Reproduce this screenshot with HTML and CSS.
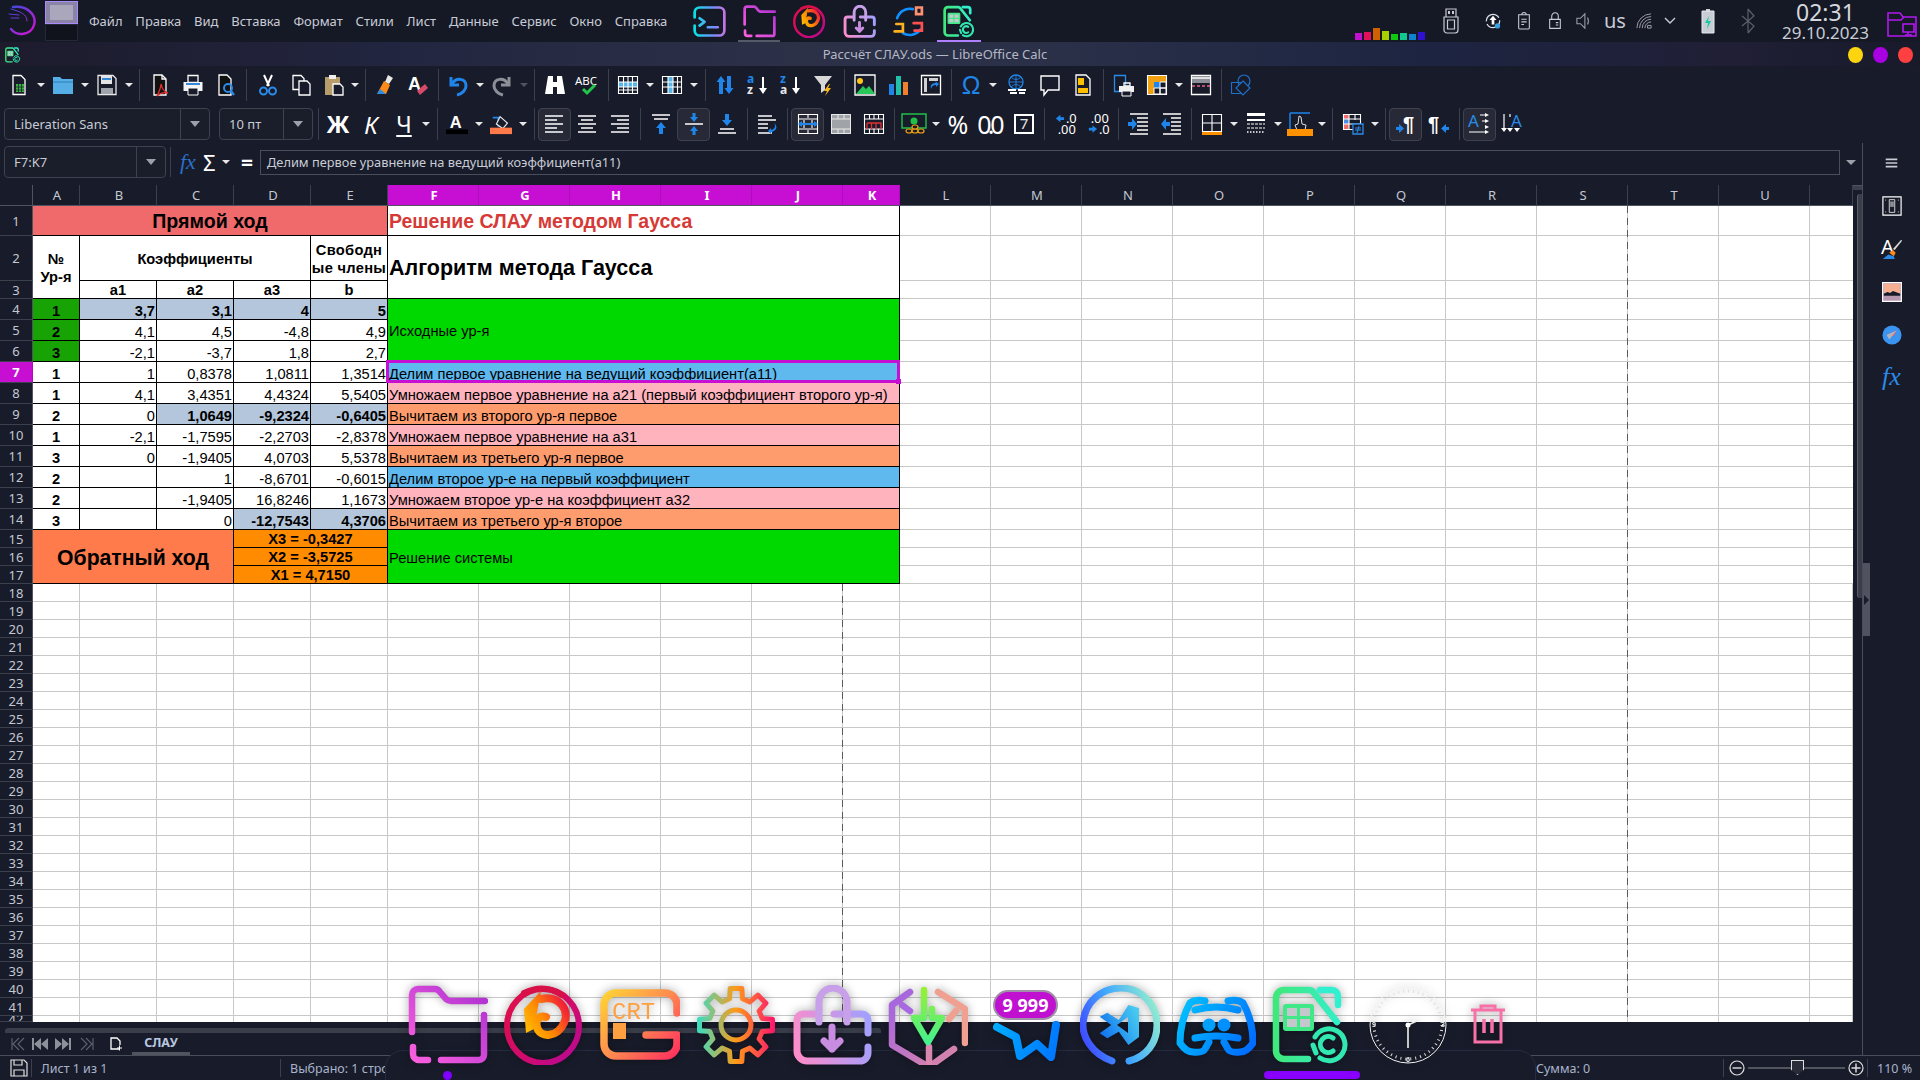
FILE: index.html
```html
<!DOCTYPE html>
<html lang="ru">
<head>
<meta charset="utf-8">
<title>Рассчёт СЛАУ.ods — LibreOffice Calc</title>
<link rel="stylesheet" href="styles.css">
</head>
<body>
<svg class="defs" width="0" height="0" aria-hidden="true">
  <defs>
    <linearGradient id="gFolder" gradientUnits="userSpaceOnUse" x1="0" y1="80" x2="80" y2="0"><stop offset="0" stop-color="#ff62e0"/><stop offset="1" stop-color="#a82fd0"/></linearGradient>
    <linearGradient id="gRing" gradientUnits="userSpaceOnUse" x1="0" y1="0" x2="80" y2="80"><stop offset="0" stop-color="#e01040"/><stop offset=".6" stop-color="#d00a70"/><stop offset="1" stop-color="#b00aa0"/></linearGradient>
    <linearGradient id="gSwirl" gradientUnits="userSpaceOnUse" x1="15" y1="50" x2="65" y2="20"><stop offset="0" stop-color="#ffd000"/><stop offset=".5" stop-color="#ff8a00"/><stop offset="1" stop-color="#f01040"/></linearGradient>
    <linearGradient id="gCrt" gradientUnits="userSpaceOnUse" x1="0" y1="0" x2="80" y2="80"><stop offset="0" stop-color="#ffdf30"/><stop offset=".5" stop-color="#ff8a50"/><stop offset="1" stop-color="#ff2060"/></linearGradient>
    <linearGradient id="gGear" gradientUnits="userSpaceOnUse" x1="0" y1="40" x2="80" y2="40"><stop offset="0" stop-color="#30e0c8"/><stop offset=".5" stop-color="#ff9a18"/><stop offset="1" stop-color="#ff1070"/></linearGradient>
    <linearGradient id="gBag" gradientUnits="userSpaceOnUse" x1="0" y1="60" x2="80" y2="40"><stop offset="0" stop-color="#ff8cc8"/><stop offset="1" stop-color="#a0a0ff"/></linearGradient>
    <linearGradient id="gHexL" gradientUnits="userSpaceOnUse" x1="0" y1="0" x2="80" y2="80"><stop offset="0" stop-color="#9c60e8"/><stop offset="1" stop-color="#e08aa0"/></linearGradient>
    <linearGradient id="gHexG" gradientUnits="userSpaceOnUse" x1="0" y1="0" x2="0" y2="60"><stop offset="0" stop-color="#9cf030"/><stop offset="1" stop-color="#40f090"/></linearGradient>
    <linearGradient id="gWave" gradientUnits="userSpaceOnUse" x1="0" y1="40" x2="80" y2="70"><stop offset="0" stop-color="#00b4ff"/><stop offset="1" stop-color="#0070ff"/></linearGradient>
    <linearGradient id="gVs" gradientUnits="userSpaceOnUse" x1="0" y1="60" x2="80" y2="30"><stop offset="0" stop-color="#4040ff"/><stop offset=".5" stop-color="#40a8ff"/><stop offset="1" stop-color="#90ecd0"/></linearGradient>
    <linearGradient id="gVsF" gradientUnits="userSpaceOnUse" x1="20" y1="50" x2="60" y2="30"><stop offset="0" stop-color="#1070f0"/><stop offset="1" stop-color="#48cdf0"/></linearGradient>
    <linearGradient id="gDisc" gradientUnits="userSpaceOnUse" x1="0" y1="20" x2="80" y2="70"><stop offset="0" stop-color="#00c4ff"/><stop offset="1" stop-color="#0064ff"/></linearGradient>
    <linearGradient id="gCalc" gradientUnits="userSpaceOnUse" x1="0" y1="40" x2="80" y2="40"><stop offset="0" stop-color="#40e878"/><stop offset="1" stop-color="#30f0d8"/></linearGradient>
    <linearGradient id="gTerm" gradientUnits="userSpaceOnUse" x1="0" y1="40" x2="80" y2="40"><stop offset="0" stop-color="#00e8e0"/><stop offset=".6" stop-color="#7090ff"/><stop offset="1" stop-color="#d070e0"/></linearGradient>
    <linearGradient id="gKali" gradientUnits="userSpaceOnUse" x1="0" y1="0" x2="30" y2="30"><stop offset="0" stop-color="#3050e0"/><stop offset="1" stop-color="#e010d0"/></linearGradient>

    <symbol id="dFolder" viewBox="0 0 80 80"><g fill="none" stroke="url(#gFolder)" stroke-width="6.5" stroke-linecap="round" stroke-linejoin="round"><path d="M4 47V10a6 6 0 0 1 6-6h17q3 0 5 3l6 7q2 2 5 2h34"/><path d="M76 30v40a5 5 0 0 1-5 5H33"/><path d="M5 62v7a6 6 0 0 0 6 6h9"/></g></symbol>
    <symbol id="dFire" viewBox="0 0 80 80"><g fill="none" stroke-linecap="round"><ellipse cx="39" cy="41" rx="36" ry="37" stroke="url(#gRing)" stroke-width="6"/><path d="M20 8Q40 -2 58 10" stroke="#d81048" stroke-width="6"/><path d="M37 14C56 10 66 26 60 38C54 52 36 54 33 42C31 34 36 30 42 32" stroke="url(#gSwirl)" stroke-width="8"/></g><path d="M37 6L20 24L22 48L30 44L34 22Z" fill="url(#gSwirl)"/></symbol>
    <symbol id="dCrt" viewBox="0 0 80 80"><g fill="none" stroke="url(#gCrt)" stroke-width="7.5" stroke-linecap="round" stroke-linejoin="round"><path d="M77 28V20a12 12 0 0 0-12-12H16A12 12 0 0 0 4 20v39a12 12 0 0 0 12 12h49a12 12 0 0 0 12-12V50H46"/></g><rect x="13" y="38" width="13" height="16" fill="#ffa040"/><text x="12" y="34" class="crt">CRT</text></symbol>
    <symbol id="dGear" viewBox="0 0 80 80"><g fill="none" stroke="url(#gGear)" stroke-width="5" stroke-linejoin="round"><path d="M33.5 13.8L34.2 3.5H45.8L46.5 13.8L53.9 16.9L61.8 10.1L69.9 18.2L63.1 26.1L66.2 33.5L76.5 34.2V45.8L66.2 46.5L63.1 53.9L69.9 61.8L61.8 69.9L53.9 63.1L46.5 66.2L45.8 76.5H34.2L33.5 66.2L26.1 63.1L18.2 69.9L10.1 61.8L16.9 53.9L13.8 46.5L3.5 45.8V34.2L13.8 33.5L16.9 26.1L10.1 18.2L18.2 10.1L26.1 16.9Z"/><circle cx="40" cy="40" r="15"/></g></symbol>
    <symbol id="dBag" viewBox="0 0 80 80"><g fill="none" stroke-width="7" stroke-linecap="round" stroke-linejoin="round"><path d="M25 29H11a6 6 0 0 0-6 6v31a10 10 0 0 0 10 10h53a8 8 0 0 0 8-8V62M76 48V35a6 6 0 0 0-6-6H42" stroke="url(#gBag)"/><path d="M27 37V17a14 14 0 0 1 28 0v20" stroke="#c8a0ea"/><path d="M40 42v22M32 56l8 8 8-8" stroke="#c88ce0"/></g></symbol>
    <symbol id="dPack" viewBox="0 0 80 80"><g fill="none" stroke-width="6.5" stroke-linecap="round" stroke-linejoin="round"><path d="M22 7L4 20v40l37 22 25-18" stroke="url(#gHexL)"/><path d="M41 62v18" stroke="#d888b0"/><path d="M22 26L14 20" stroke="#a868e0"/><path d="M50 7l27 17v34" stroke="#f0a090"/><path d="M68 26l-7 8" stroke="#f0a090"/><path d="M36 5v28H26l14 24 14-24H44V24" stroke="url(#gHexG)"/></g></symbol>
    <symbol id="dWave" viewBox="0 0 80 80"><path d="M13 42L32 52L36 71L53 59L67 72L72 40" fill="none" stroke="url(#gWave)" stroke-width="8" stroke-linecap="round" stroke-linejoin="round"/></symbol>
    <symbol id="dVs" viewBox="0 0 80 80"><path d="M32 76C10 68 2 50 3 38C5 16 22 3 41 3C60 3 77 18 77 40C77 58 66 72 49 76" fill="none" stroke="url(#gVs)" stroke-width="7" stroke-linecap="round"/><path fill="url(#gVsF)" fill-rule="evenodd" d="M59 23V52L48.4 60 38.8 46.7 27.3 53.3 19.7 48.3 31.2 40 19.7 31.7 27.3 27.7 38.8 35 48.4 20ZM48 32V48L37 40Z"/></symbol>
    <symbol id="dDisc" viewBox="0 0 80 80"><g fill="none" stroke="url(#gDisc)" stroke-width="7" stroke-linecap="round" stroke-linejoin="round"><path d="M29 16Q20 14 14 18Q4 36 4 58Q10 67 17 67Q27 68 29 64L33 57M52 16Q61 14 67 18Q77 36 77 58Q71 67 64 67Q54 68 52 64L48 57"/><path d="M19 25Q40 19 62 25M19 53Q40 49 62 53"/></g><circle cx="33" cy="40" r="6.5" fill="#00a0ff"/><circle cx="48" cy="40" r="6.5" fill="#0090ff"/></symbol>
    <symbol id="dCalc" viewBox="0 0 80 80"><g fill="none" stroke-linecap="round" stroke-linejoin="round"><path d="M36 74H12a8 8 0 0 1-8-8V13a8 8 0 0 1 8-8H37q3 0 5 3L65 37" stroke="url(#gCalc)" stroke-width="6.5"/><path d="M48 5H60a6 6 0 0 1 6 6v9" stroke="#30f0d0" stroke-width="6.5"/><path d="M43 52A16 16 0 1 1 48 73M41 60L44 68" stroke="#30e8b0" stroke-width="5"/><path d="M61 53A8 8 0 1 0 61 66" stroke="#30e8b0" stroke-width="5"/></g><rect x="11" y="19" width="31" height="27" rx="3" fill="#40e888"/><path fill="#c4c8cc" d="M15 23h10v8H15zM28 23h10v8H28zM15 34h10v8H15zM28 34h10v8H28z"/></symbol>
    <symbol id="dTerm" viewBox="0 0 80 80"><g fill="none" stroke="url(#gTerm)" stroke-width="6.5" stroke-linecap="round" stroke-linejoin="round"><path d="M4 30V18A12 12 0 0 1 16 6H64A12 12 0 0 1 76 18V62A12 12 0 0 1 64 74H16A12 12 0 0 1 4 62V50"/><path d="M16 32l12 9-12 9M36 54H60"/></g></symbol>
    <symbol id="dSync" viewBox="0 0 80 80"><g fill="none" stroke-width="6.5" stroke-linecap="round"><path d="M48 10A32 32 0 0 0 10 32M66 60A32 32 0 0 1 24 68" stroke="#1090ff"/><path d="M8 46H24V64H4" stroke="#ffb020"/><path d="M56 6H70V22H56Z" stroke="#ff9070"/><path d="M50 44H70V62H52" stroke="#ff5050"/></g></symbol>
  </defs>
</svg>

<div class="app">
  <header class="panel">
    <svg class="kali" viewBox="0 0 30 32"><g fill="none" stroke="url(#gKali)" stroke-width="2.400" stroke-linecap="round"><path d="M6 2C20 0 30 10 27 20C24 30 10 32 4 24"/><path d="M4 4C14 7 20 9 20 16" stroke-width="1"/><path d="M2 9L12 10M4 13L12 13" stroke-width="1"/></g></svg>
    <div class="pager"><span class="desk on"><i></i></span><span class="desk"></span></div>
    <nav class="menu"><span>Файл</span><span>Правка</span><span>Вид</span><span>Вставка</span><span>Формат</span><span>Стили</span><span>Лист</span><span>Данные</span><span>Сервис</span><span>Окно</span><span>Справка</span></nav>
    <div class="tasks">
      <span class="task"><svg class="tico"><use href="#dTerm"/></svg></span>
      <span class="task open"><svg class="tico"><use href="#dFolder"/></svg></span>
      <span class="task"><svg class="tico"><use href="#dFire"/></svg></span>
      <span class="task"><svg class="tico"><use href="#dBag"/></svg></span>
      <span class="task"><svg class="tico"><use href="#dSync"/></svg></span>
      <span class="task cur"><svg class="tico"><use href="#dCalc"/></svg></span>
    </div>
    <div class="eq"><i class="e1"></i><i class="e2"></i><i class="e3"></i><i class="e4"></i><i class="e5"></i><i class="e6"></i><i class="e7"></i><i class="e8"></i></div>
    <div class="tray">
      <svg class="tr w16" viewBox="0 0 16 26"><g fill="none" stroke="#c8ccd4" stroke-width="1.2"><path d="M3 1h10v8H3zM1 9h14v13a3 3 0 0 1-3 3H4a3 3 0 0 1-3-3z"/><path d="M4.5 12h7v9h-7z"/></g><path fill="#c8ccd4" d="M5 3h2v3H5zM9 3h2v3H9z"/></svg>
      <svg class="tr w18 m1" viewBox="0 0 18 18"><circle cx="9" cy="9" r="7.5" fill="none" stroke="#e0e2e8" stroke-width="1.4" stroke-dasharray="20 3"/><path fill="#fff" d="M9 3l4 5h-2.5v5h-3V8H5z"/><circle cx="14" cy="14.5" r="3" fill="#38a0e0"/></svg>
      <svg class="tr w18 m2" viewBox="0 0 18 20"><g fill="none" stroke="#c8ccd4" stroke-width="1.2"><path d="M3 3h12v15a1 1 0 0 1-1 1H4a1 1 0 0 1-1-1zM6.5 3a2.5 2.5 0 0 1 5 0M6 8h6M6 11h6M6 14h3"/></g></svg>
      <svg class="tr w18 m3" viewBox="0 0 18 22"><g fill="none" stroke="#c8ccd4" stroke-width="1.3"><path d="M2.500 9h13v11h-13zM5 9V5a4 4 0 0 1 8 0v4M10 13h3M10 16h3"/></g></svg>
      <svg class="tr w18 m4" viewBox="0 0 18 20"><g fill="none" stroke="#9ca0aa" stroke-width="1.2"><path d="M1 7h4l5-5v16l-5-5H1zM13 6q2 4 0 8"/></g></svg>
      <span class="us">us</span>
      <svg class="tr w18 m5" viewBox="0 0 18 18"><g fill="none" stroke="#a8acb4" stroke-width="1"><path d="M1 17A16 16 0 0 1 17 1M4 17A13 13 0 0 1 17 4M7 17A10 10 0 0 1 17 7M10 17A7 7 0 0 1 17 10"/><path d="M13 17v-3h4v3z"/></g></svg>
      <svg class="tr w12 m6" viewBox="0 0 12 8"><path d="M1 1l5 5 5-5" fill="none" stroke="#c8ccd4" stroke-width="1.4"/></svg>
      <svg class="tr w14 m7" viewBox="0 0 14 26"><path d="M5 1h4v2H5z" fill="#c8ccd4"/><path d="M1 3h12v22H1z" fill="#c8ccd4" stroke="#e8eaee"/><path d="M8 8L4 15h3l-1 6 4-8H7z" fill="#18c8a0"/></svg>
      <svg class="tr w14 m8" viewBox="0 0 14 26"><path d="M7 1v24M7 1l6 7-12 10M7 25l6-7L1 8" fill="none" stroke="#5c606a" stroke-width="1.2"/></svg>
      <div class="clock"><span class="time">02:31</span><span class="date">29.10.2023</span></div>
      <svg class="tr w30" viewBox="0 0 30 25"><g fill="none" stroke="#b018f0" stroke-width="1.6"><path d="M1 24V1h12l3 4h13v19z"/><path d="M1 8h13l3-3"/><path d="M16 12h11v8H16zM21 20v2M18 23h7"/></g></svg>
    </div>
  </header>

  <div class="titlebar">
    <svg class="docico" viewBox="0 0 80 80"><use href="#dCalc"/></svg>
    <span class="wtitle">Рассчёт СЛАУ.ods — LibreOffice Calc</span>
    <div class="winbtns"><i class="wy"></i><i class="wp"></i><i class="wr"></i></div>
  </div>

  <div class="toolbar tb1">
    <span class="btn"><svg viewBox="0 0 22 22"><path d="M5 1.500h8l4 4v15H5z" class="o"/><path fill="#3cb043" d="M8 10h8v8H8z"/><path d="M8 13h8M8 16h8M10.500 10v8M13.500 10v8" stroke="#181b29" stroke-width=".7"/></svg></span><span class="arr"></span>
    <span class="btn"><svg viewBox="0 0 22 22"><path d="M1 3h7l2 2h11v15H1z" fill="#56aee6"/><path d="M1 8h20" stroke="#2d7fb6"/></svg></span><span class="arr"></span>
    <span class="btn"><svg viewBox="0 0 22 22"><path d="M2 1.500h15l3 3v16H2z" fill="#181b29" stroke="#e8e8e8" stroke-width="1.300"/><path d="M5 2h11v8H5z" fill="#e4e4e4"/><path d="M6 5h9" stroke="#3488d8" stroke-width="2"/><path d="M5 14h12v6H5z" fill="#a0a4ac"/></svg></span><span class="arr"></span>
    <span class="sep"></span>
    <span class="btn"><svg viewBox="0 0 22 22"><path d="M5 1h8l4 4v16H5z" fill="#111" stroke="#fff" stroke-width="1.300"/><path d="M13 1v4h4" class="o"/><path d="M12 10c1 4 2 7 7 9-4-1-8 0-11 3 2-4 4-8 4-12z" fill="none" stroke="#e03030" stroke-width="1.300"/></svg></span>
    <span class="btn"><svg viewBox="0 0 22 22"><path d="M6 1.500h10v7H6z" class="o"/><path d="M1.500 8h19v9h-19z" fill="#f4f4f4"/><path d="M4 10h14" stroke="#3488d8" stroke-width="2"/><path d="M6 14h10v7H6z" fill="#181b29" stroke="#fff"/></svg></span>
    <span class="btn"><svg viewBox="0 0 22 22"><path d="M4 1h8l4 4v16H4z" fill="#111" stroke="#fff" stroke-width="1.300"/><circle cx="13" cy="14" r="4" fill="none" stroke="#2a8ae8" stroke-width="2"/><path d="M16 17l3 4" stroke="#2a8ae8" stroke-width="2.400"/></svg></span>
    <span class="sep"></span>
    <span class="btn nudge"><svg viewBox="0 0 22 22"><path d="M7 1l5 11M15 1l-5 11" stroke="#fff" stroke-width="2"/><circle cx="6.500" cy="17" r="3.500" fill="none" stroke="#2a8ae8" stroke-width="2"/><circle cx="15.500" cy="17" r="3.500" fill="none" stroke="#2a8ae8" stroke-width="2"/></svg></span>
    <span class="btn"><svg viewBox="0 0 22 22"><path d="M3 1.500h8l3 3v11H3z" fill="#181b29" stroke="#fff" stroke-width="1.300"/><path d="M9 7h8l3 3v11H9z" fill="#181b29" stroke="#fff" stroke-width="1.300"/></svg></span>
    <span class="btn"><svg viewBox="0 0 22 22"><path d="M2 3h15v18H2z" fill="#b89c6c"/><path d="M6 1h7v4H6z" fill="#f0f0f0"/><path d="M10 10h7l3 3v8H10z" fill="#181b29" stroke="#fff" stroke-width="1.300"/></svg></span><span class="arr short"></span>
    <span class="sep"></span>
    <span class="btn"><svg viewBox="0 0 22 22"><path d="M14 1l5 3-4 6-4-2z" fill="#e8e8e8"/><path d="M10 7l6 4-4 9H3z" fill="#ff8a18"/><path d="M3 20l3-5 6 5z" fill="#2a8ae8"/></svg></span>
    <span class="btn"><svg viewBox="0 0 22 22"><text x="1" y="16" class="ta">A</text><path d="M13 21l-3-4 8-7 3 4z" fill="#d84a6a"/></svg></span>
    <span class="sep"></span>
    <span class="btn tight"><svg viewBox="0 0 22 22"><g fill="none" stroke="#1f85ea" stroke-width="3"><path d="M4 3v8h8"/><path d="M5 10C9 3 19 4 19 12C19 16 15 20 10 21"/></g></svg></span><span class="arr"></span>
    <span class="btn"><svg viewBox="0 0 22 22"><g fill="none" stroke="#8c9098" stroke-width="3"><path d="M18 3v8h-8"/><path d="M17 10C13 3 3 4 3 12C3 16 7 20 12 21"/></g></svg></span><span class="arr dim"></span>
    <span class="sep"></span>
    <span class="btn"><svg viewBox="0 0 22 22"><path d="M4 2h5v6h4V2h5l3 18H13v-7H9v7H1z" fill="#fff"/></svg></span>
    <span class="btn spell"><svg viewBox="0 0 26 22"><text x="0" y="11" class="tabc">ABC</text><path d="M8 15l4 4 8-8" fill="none" stroke="#22c84a" stroke-width="3"/></svg></span>
    <span class="sep"></span>
    <span class="btn"><svg viewBox="0 0 22 22"><path d="M1 8h20v5H1z" fill="#56b4ea"/><path d="M1.500 2.500h19v17h-19zM1 8h20M1 13h20M1 16h20M6.500 2v18M11 2v18M15.500 2v18" class="ol"/></svg></span><span class="arr"></span>
    <span class="btn"><svg viewBox="0 0 22 22"><path d="M7 2h5v18H7z" fill="#56b4ea"/><path d="M1.500 2.500h19v17h-19zM1 8h20M1 13h20M7 2v18M12 2v18M16.500 2v18" class="ol"/></svg></span><span class="arr"></span>
    <span class="sep"></span>
    <span class="btn"><svg viewBox="0 0 22 22"><path d="M7 2l4.500 6H9v12H5V8H2.500zM15 20l-4.500-6H13V2h4v12h2.500z" fill="#1f85ea"/></svg></span>
    <span class="btn"><svg viewBox="0 0 22 22"><text x="0" y="9" class="tsb">a</text><text x="0" y="20" class="tsw">z</text><path d="M15 3h2v11h3l-4 6-4-6h3z" fill="#fff"/></svg></span>
    <span class="btn"><svg viewBox="0 0 22 22"><text x="0" y="9" class="tsb">z</text><text x="0" y="20" class="tsw">a</text><path d="M15 3h2v11h3l-4 6-4-6h3z" fill="#fff"/></svg></span>
    <span class="btn"><svg viewBox="0 0 22 22"><path d="M1 2h18l-7 9v5l-4 3v-8z" fill="#d8d8d8"/><path d="M16 10l-5 7h3l-2 5 6-8h-3l2-4z" fill="#ffb818"/></svg></span>
    <span class="sep"></span>
    <span class="btn"><svg viewBox="0 0 22 22"><path d="M1 1h20v20H1z" fill="#181b29" stroke="#fff" stroke-width="1.300"/><circle cx="6" cy="7" r="3" fill="#ffc818"/><path d="M2 20l7-8 3 3 3-3 6 8z" fill="#28c858"/></svg></span>
    <span class="btn"><svg viewBox="0 0 22 22"><path d="M2 10h5v11H2z" fill="#1f85ea"/><path d="M9 2h5v19H9z" fill="#22c0a8"/><path d="M16 8h5v13h-5z" fill="#f08030"/></svg></span>
    <span class="btn"><svg viewBox="0 0 22 22"><path d="M1.500 1.500h19v19h-19z" class="o"/><path d="M4 4h3v14H4zM9 4h9v3H9z" fill="#d0d0d0"/><path d="M11 15c-1-4 1-6 5-6l-1-2 4 3-3 3v-2c-3 0-4 1-5 4z" fill="#1f85ea"/></svg></span>
    <span class="sep"></span>
    <span class="btn"><span class="omega">Ω</span></span><span class="arr"></span>
    <span class="btn push"><svg viewBox="0 0 22 22"><circle cx="10" cy="8" r="7" fill="none" stroke="#1f85ea" stroke-width="1.300"/><path d="M3 8h14M10 1v14M5 3q5 5 10 0M5 13q5-5 10 0" fill="none" stroke="#1f85ea" stroke-width=".9"/><path d="M2 16h8M12 16h8M4 19h7M13 19h6" stroke="#fff" stroke-width="2"/></svg></span>
    <span class="btn"><svg viewBox="0 0 22 22"><path d="M2 2h18v14H9l-4 5v-5H2z" fill="#181b29" stroke="#fff" stroke-width="1.400"/></svg></span>
    <span class="btn"><svg viewBox="0 0 22 22"><path d="M4 1h10l4 4v16H4z" fill="#181b29" stroke="#fff" stroke-width="1.300"/><path d="M6 4h6v7H6zM6 14h10v5H6z" fill="#ffc000"/></svg></span>
    <span class="sep"></span>
    <span class="btn"><svg viewBox="0 0 22 22"><path d="M1.500 1.500h11v16h-11z" fill="none" stroke="#2a8ae8" stroke-width="1.300"/><path d="M11 9h6v3h-6z" class="o"/><path d="M6 12h15v6H6z" fill="#f0f0f0"/><path d="M9 17h9v5H9z" fill="#181b29" stroke="#fff"/></svg></span>
    <span class="btn"><svg viewBox="0 0 22 22"><path d="M1 1h20v20H1z" fill="#f0a010"/><path d="M8 8h6v6H8z" fill="#1f85ea"/><path d="M1.500 1.500h19v19h-19z" class="ol"/><path d="M14 8h6v6h-6zM8 14h6v6H8zM14 14h6v6h-6z" fill="#181b29" stroke="#fff" stroke-width="1"/></svg></span><span class="arr"></span>
    <span class="btn"><svg viewBox="0 0 22 22"><path d="M1.500 1.500h19v19h-19z" class="o"/><path d="M2 2h18v7H2z" fill="#8c9098"/><path d="M2 4h18" stroke="#e0e0e0" stroke-width="2"/><path d="M2 12h18" stroke="#e86a88" stroke-width="1.300" stroke-dasharray="3 2"/></svg></span>
    <span class="sep"></span>
    <span class="btn"><svg viewBox="0 0 22 22"><circle cx="14" cy="7" r="6" fill="none" stroke="#1f6fc8" stroke-width="1.200"/><path d="M1.500 8.500h10v11h-10z" fill="none" stroke="#1f6fc8" stroke-width="1.200"/><path d="M13 7l7 7-7 7-7-7z" fill="#181b29" stroke="#1f6fc8" stroke-width="1.200"/></svg></span>
  </div>

  <div class="toolbar tb2">
    <div class="combo font"><span class="val">Liberation Sans</span><span class="drop"></span></div>
    <div class="combo size"><span class="val">10 пт</span><span class="drop"></span></div>
    <span class="sep"></span>
    <span class="btn glyph bold">Ж</span>
    <span class="btn glyph ital">К</span>
    <span class="btn glyph under">Ч</span><span class="arr"></span>
    <span class="sep"></span>
    <span class="btn"><svg viewBox="0 0 24 22"><text x="4" y="15" class="ta">A</text><path d="M0 17h24v5H0z" fill="#000"/></svg></span><span class="arr"></span>
    <span class="btn"><svg viewBox="0 0 24 22"><path d="M3 4h6v10" fill="none" stroke="#1f85ea" stroke-width="1.800"/><path d="M11 3l8 7-5 6-7-5z" fill="#181b29" stroke="#e8e8e8" stroke-width="1.300"/><path d="M0 15h24v7H0z" fill="#ff7a4a"/></svg></span><span class="arr"></span>
    <span class="sep"></span>
    <span class="btn on"><svg viewBox="0 0 22 22"><path d="M2 3h18M2 7h12M2 11h18M2 15h12M2 19h18" class="ln"/></svg></span>
    <span class="btn"><svg viewBox="0 0 22 22"><path d="M2 3h18M5 7h12M2 11h18M5 15h12M2 19h18" class="ln"/></svg></span>
    <span class="btn"><svg viewBox="0 0 22 22"><path d="M2 3h18M8 7h12M2 11h18M8 15h12M2 19h18" class="ln"/></svg></span>
    <span class="sep"></span>
    <span class="btn"><svg viewBox="0 0 22 22"><path d="M2 2h18M4 6h14" class="ln"/><path d="M11 9l5 6h-3v6H9v-6H6z" fill="#1f85ea"/></svg></span>
    <span class="btn on"><svg viewBox="0 0 22 22"><path d="M11 9L7 4h2.500V0h3v4H15zM11 13l4 5h-2.500v4h-3v-4H7z" fill="#1f85ea"/><path d="M2 11h18" class="ln"/></svg></span>
    <span class="btn"><svg viewBox="0 0 22 22"><path d="M11 13l5-6h-3V1H9v6H6z" fill="#1f85ea"/><path d="M4 16h14M2 20h18" class="ln"/></svg></span>
    <span class="sep"></span>
    <span class="btn"><svg viewBox="0 0 22 22"><path d="M2 3h14M2 7h18M2 11h10M2 15h10M2 20h14" class="ln"/><path d="M18 10c2 3 1 6-3 7v-2l-3 3 3 3v-2c6-1 7-6 3-9z" fill="#1f85ea"/></svg></span>
    <span class="sep"></span>
    <span class="btn on"><svg viewBox="0 0 22 22"><path d="M1.500 1.500h19v19h-19zM1 6h20M1 16h20M11 1v4M11 17v4M7 7v8M15 7v8" class="ol"/><path d="M1 11l4-3v2h12V8l4 3-4 3v-2H5v2z" fill="#1f85ea"/></svg></span>
    <span class="btn"><svg viewBox="0 0 22 22"><path d="M1 1h20v20H1z" fill="#a0a4a8"/><path d="M1.500 1.500h19v19h-19zM1 6h20M1 16h20M8 1v5M14 1v5M8 16v5M14 16v5" class="gl"/></svg></span>
    <span class="btn"><svg viewBox="0 0 22 22"><path d="M1.500 1.500h19v19h-19zM1 6h20M1 16h20M6.500 1v5M11 1v5M15.500 1v5M6.500 16v5M11 16v5M15.500 16v5" class="ol"/><path d="M4 10h14v6M4 10v6M8.500 10v6M13 10v6" fill="none" stroke="#e03030" stroke-width="1.300"/></svg></span>
    <span class="sep"></span>
    <span class="btn wide"><svg viewBox="0 0 26 24"><path d="M1 2h24v14H1z" fill="#181b29" stroke="#22c04a" stroke-width="1.400"/><circle cx="13" cy="9" r="3.500" fill="#22c04a"/><g fill="#181b29" stroke="#f0a010" stroke-width="1.200"><ellipse cx="8" cy="19" rx="3" ry="2"/><ellipse cx="14" cy="19" rx="3" ry="2"/><ellipse cx="20" cy="19" rx="3" ry="2"/><ellipse cx="14" cy="15" rx="3" ry="2"/></g></svg></span><span class="arr"></span>
    <span class="btn glyph nf">%</span>
    <span class="btn glyph nf tightnum">0.0</span>
    <span class="btn"><span class="seven">7</span></span>
    <span class="sep"></span>
    <span class="btn"><svg viewBox="0 0 24 22"><path d="M2 5l5-4v2.500h4v3H7V9z" fill="#1f85ea"/><text x="13" y="10" class="td">.0</text><text x="4" y="22" class="td">.00</text></svg></span>
    <span class="btn"><svg viewBox="0 0 24 22"><text x="4" y="10" class="td">.00</text><path d="M2 15h4v-2.500l5 4-5 4V18H2z" fill="#1f85ea"/><text x="13" y="22" class="td">.0</text></svg></span>
    <span class="sep"></span>
    <span class="btn"><svg viewBox="0 0 22 22"><path d="M3 1h18M10 5h11M10 9h11M10 13h11M10 17h11M3 21h18" class="ln"/><path d="M1 9h4V5l5 6-5 6v-4H1z" fill="#1f85ea"/></svg></span>
    <span class="btn"><svg viewBox="0 0 22 22"><path d="M3 1h18M11 5h10M11 9h10M11 13h10M11 17h10M3 21h18" class="ln"/><path d="M10 9H6V5l-5 6 5 6v-4h4z" fill="#1f85ea"/></svg></span>
    <span class="sep"></span>
    <span class="btn"><svg viewBox="0 0 22 22"><path d="M1.500 1.500h19v17h-19zM1 10h20M11 1v18" class="ol"/><path d="M1 19h20v3H1z" fill="#ff9000"/></svg></span><span class="arr"></span>
    <span class="btn"><svg viewBox="0 0 22 22"><path d="M2 0h18v3H2zM2 6h18v2H2z" fill="#fff"/><path d="M2 11h18M2 15h18" stroke="#fff" stroke-width="1" stroke-dasharray="3 1"/><path d="M2 19h18" stroke="#fff" stroke-width="1.500" stroke-dasharray="1.500 1.500"/></svg></span><span class="arr"></span>
    <span class="btn wide"><svg viewBox="0 0 26 24"><path d="M3 1h20M3 1v16" stroke="#1f85ea" stroke-width="1.500"/><path d="M12 4l2 1 1 7 4 1-1 5h-8l-2-5 3-1z" fill="#181b29" stroke="#e0e0e0"/><path d="M0 17h26v7H0z" fill="#ff9000"/></svg></span><span class="arr"></span>
    <span class="sep"></span>
    <span class="btn"><svg viewBox="0 0 22 22"><path d="M1 1h6v5H1z" fill="#f06a6a"/><path d="M1 6h6v5H1z" fill="#4a8ae0"/><path d="M1 11h6v5H1z" fill="#f06a6a"/><path d="M1.500 1.500h17v15h-17zM1 6h18M1 11h18M7 1v15M13 1v6" class="ol"/><path d="M11 11h10v10H11z" fill="#181b29" stroke="#2a8ae8" stroke-width="1.300"/><path d="M13 15h6M13 17h6M17 13l-2 7" stroke="#2a8ae8"/></svg></span><span class="arr"></span>
    <span class="sep"></span>
    <span class="btn on"><svg viewBox="0 0 22 22"><text x="8" y="18" class="tp">¶</text><path d="M1 14h3v-3l5 4.500L4 20v-3H1z" fill="#1f85ea"/></svg></span>
    <span class="btn"><svg viewBox="0 0 22 22"><text x="0" y="18" class="tp">¶</text><path d="M21 14h-3v-3l-5 4.500 5 4.500v-3h3z" fill="#1f85ea"/></svg></span>
    <span class="sep"></span>
    <span class="btn on"><svg viewBox="0 0 22 22"><text x="0" y="14" class="tblue">A</text><path d="M12 2h7M14 8h5M1 19h18" stroke="#fff" stroke-width="1.200"/><path d="M17 0l4 2-4 2zM17 6l4 2-4 2zM17 12l4 2-4 2zM17 17l4 2-4 2z" fill="#fff"/></svg></span>
    <span class="btn"><svg viewBox="0 0 22 22"><text x="10" y="14" class="tblue">A</text><path d="M3 1v15M9 1v3" stroke="#fff" stroke-width="1.200"/><path d="M0 15h6l-3 4zM6 15h6l-3 4zM13 15h6l-3 4z" fill="#fff"/></svg></span>
  </div>

  <div class="workspace">
    <div class="docarea">
      <div class="formula">
        <div class="combo name"><span class="val">F7:K7</span><span class="drop"></span></div>
        <span class="sep"></span>
        <span class="fx">fx</span>
        <span class="sigma">Σ</span><span class="arr"></span>
        <span class="eqsign">=</span>
        <div class="input">Делим первое уравнение на ведущий коэффициент(а11)</div>
        <span class="fdrop"></span>
      </div>
      <div class="viewrow">
        <div class="sheet">
          <div class="ch corner"></div>
          <div class="ch">A</div><div class="ch">B</div><div class="ch">C</div><div class="ch">D</div><div class="ch">E</div>
          <div class="ch sel-h">F</div><div class="ch sel-h">G</div><div class="ch sel-h">H</div><div class="ch sel-h">I</div><div class="ch sel-h">J</div><div class="ch sel-h">K</div>
          <div class="ch">L</div><div class="ch">M</div><div class="ch">N</div><div class="ch">O</div><div class="ch">P</div><div class="ch">Q</div><div class="ch">R</div><div class="ch">S</div><div class="ch">T</div><div class="ch">U</div><div class="ch"></div>

          <div class="rh">1</div>
          <div class="c s5 ctr big red-bg">Прямой ход</div>
          <div class="c s6 title-red">Решение СЛАУ методом Гаусса</div>
          <div class="blank"></div>

          <div class="rh">2</div>
          <div class="c r2 ctr mid b wrap">№<br>Ур-я</div>
          <div class="c s3 ctr mid b">Коэффициенты</div>
          <div class="c ctr mid b wrap free">Свободн<br>ые члены</div>
          <div class="c s6 r2 mid algo">Алгоритм метода Гаусса</div>
          <div class="blank"></div>

          <div class="rh">3</div>
          <div class="c ctr b">a1</div><div class="c ctr b">a2</div><div class="c ctr b">a3</div><div class="c ctr b">b</div>
          <div class="blank"></div>

          <div class="rh">4</div>
          <div class="c ctr b green-d">1</div><div class="c val-n b blue">3,7</div><div class="c val-n b blue">3,1</div><div class="c val-n b blue">4</div><div class="c val-n b blue">5</div>
          <div class="c s6 r3 mid green">Исходные ур-я</div>
          <div class="blank"></div>

          <div class="rh">5</div>
          <div class="c ctr b green-d">2</div><div class="c val-n">4,1</div><div class="c val-n">4,5</div><div class="c val-n">-4,8</div><div class="c val-n">4,9</div>
          <div class="blank"></div>

          <div class="rh">6</div>
          <div class="c ctr b green-d">3</div><div class="c val-n">-2,1</div><div class="c val-n">-3,7</div><div class="c val-n">1,8</div><div class="c val-n">2,7</div>
          <div class="blank"></div>

          <div class="rh sel-h">7</div>
          <div class="c ctr b">1</div><div class="c val-n">1</div><div class="c val-n">0,8378</div><div class="c val-n">1,0811</div><div class="c val-n">1,3514</div>
          <div class="c s6 sky">Делим первое уравнение на ведущий коэффициент(а11)</div>
          <div class="blank"></div>

          <div class="rh">8</div>
          <div class="c ctr b">1</div><div class="c val-n">4,1</div><div class="c val-n">3,4351</div><div class="c val-n">4,4324</div><div class="c val-n">5,5405</div>
          <div class="c s6 pink">Умножаем первое уравнение на а21 (первый коэффициент второго ур-я)</div>
          <div class="blank"></div>

          <div class="rh">9</div>
          <div class="c ctr b">2</div><div class="c val-n">0</div><div class="c val-n b blue">1,0649</div><div class="c val-n b blue">-9,2324</div><div class="c val-n b blue">-0,6405</div>
          <div class="c s6 salmon">Вычитаем из второго ур-я первое</div>
          <div class="blank"></div>

          <div class="rh">10</div>
          <div class="c ctr b">1</div><div class="c val-n">-2,1</div><div class="c val-n">-1,7595</div><div class="c val-n">-2,2703</div><div class="c val-n">-2,8378</div>
          <div class="c s6 pink">Умножаем первое уравнение на а31</div>
          <div class="blank"></div>

          <div class="rh">11</div>
          <div class="c ctr b">3</div><div class="c val-n">0</div><div class="c val-n">-1,9405</div><div class="c val-n">4,0703</div><div class="c val-n">5,5378</div>
          <div class="c s6 salmon">Вычитаем из третьего ур-я первое</div>
          <div class="blank"></div>

          <div class="rh">12</div>
          <div class="c ctr b">2</div><div class="c val-n"></div><div class="c val-n">1</div><div class="c val-n">-8,6701</div><div class="c val-n">-0,6015</div>
          <div class="c s6 sky">Делим второе ур-е на первый коэффициент</div>
          <div class="blank"></div>

          <div class="rh">13</div>
          <div class="c ctr b">2</div><div class="c val-n"></div><div class="c val-n">-1,9405</div><div class="c val-n">16,8246</div><div class="c val-n">1,1673</div>
          <div class="c s6 pink">Умножаем второе ур-е на коэффициент а32</div>
          <div class="blank"></div>

          <div class="rh">14</div>
          <div class="c ctr b">3</div><div class="c val-n"></div><div class="c val-n">0</div><div class="c val-n b blue">-12,7543</div><div class="c val-n b blue">4,3706</div>
          <div class="c s6 salmon">Вычитаем из третьего ур-я второе</div>
          <div class="blank"></div>

          <div class="rh">15</div>
          <div class="c s3 r3 ctr mid back">Обратный ход</div>
          <div class="c s2 ctr b orange">X3 = -0,3427</div>
          <div class="c s6 r3 mid green">Решение системы</div>
          <div class="blank"></div>

          <div class="rh">16</div>
          <div class="c s2 ctr b orange">X2 = -3,5725</div>
          <div class="blank"></div>

          <div class="rh">17</div>
          <div class="c s2 ctr b orange">X1 = 4,7150</div>
          <div class="blank"></div>

          <div class="rh">18</div>
          <div class="strip"></div><div class="strip"></div><div class="strip"></div><div class="strip"></div><div class="strip"></div><div class="strip"></div><div class="strip"></div><div class="strip"></div><div class="strip"></div><div class="strip"></div><div class="strip"></div><div class="strip"></div><div class="strip"></div><div class="strip"></div><div class="strip"></div><div class="strip"></div><div class="strip"></div><div class="strip"></div><div class="strip"></div><div class="strip"></div><div class="strip"></div><div class="strip"></div>
          <div class="rh">19</div><div class="rh">20</div><div class="rh">21</div><div class="rh">22</div><div class="rh">23</div><div class="rh">24</div><div class="rh">25</div><div class="rh">26</div><div class="rh">27</div><div class="rh">28</div><div class="rh">29</div><div class="rh">30</div><div class="rh">31</div><div class="rh">32</div><div class="rh">33</div><div class="rh">34</div><div class="rh">35</div><div class="rh">36</div><div class="rh">37</div><div class="rh">38</div><div class="rh">39</div><div class="rh">40</div><div class="rh">41</div><div class="rh">42</div>

          <div class="pagebreak pb-j"></div>
          <div class="pagebreak pb-s"></div>
          <div class="selection"><i class="handle"></i></div>
        </div>
        <div class="vscroll"><span class="vbtn"></span><span class="vtrack"></span></div>
      </div>
      <div class="tabzone">
        <div class="hscroll"></div>
        <div class="tabs">
          <svg class="nav n1" viewBox="0 0 14 14"><path d="M1 1v12M8 1L2 7l6 6M13 1L7 7l6 6" fill="none" stroke="#5c606a" stroke-width="1.200"/></svg>
          <svg class="nav n2" viewBox="0 0 16 14"><path d="M0 1h2v12H0zM9 1v12L2 7zM16 1v12L9 7z" fill="#8c9098"/></svg>
          <svg class="nav n3" viewBox="0 0 16 14"><path d="M14 1h2v12h-2zM7 1v12l7-6zM0 1v12l7-6z" fill="#8c9098"/></svg>
          <svg class="nav n4" viewBox="0 0 14 14"><path d="M13 1v12M6 1l6 6-6 6M1 1l6 6-6 6" fill="none" stroke="#5c606a" stroke-width="1.200"/></svg>
          <svg class="nav n5" viewBox="0 0 12 14"><path d="M9 12H1V1h6l3 3v4" fill="none" stroke="#fff" stroke-width="1.300"/><path d="M7 11h5M9.500 8.500v5" stroke="#fff"/></svg>
          <span class="tab">СЛАУ</span>
        </div>
      </div>
    </div>
    <aside class="deck">
      <i class="deck-handle"></i>
      <svg class="dk dk-menu" viewBox="0 0 18 14"><path d="M1 2h16M1 7h16M1 12h16" stroke="#c8ccd4" stroke-width="2.400"/></svg>
      <svg class="dk" viewBox="0 0 22 22"><path d="M1 1h20v20H1z" fill="#181b29" stroke="#fff" stroke-width="1.300"/><path d="M8 4h6v14H8z" fill="none" stroke="#e0e0e0"/><path d="M9 6h4v6H9z" fill="#8c9098"/><path d="M4 4v1M18 4v1M4 17v1M18 17v1" stroke="#e0e0e0"/></svg>
      <svg class="dk dk-style" viewBox="0 0 24 24"><text x="0" y="17" class="tsty">A</text><path d="M22 2l1 1-8 10-2-1z" fill="#d8d8d8"/><path d="M9 16l4-3 3 3-2 4z" fill="#ff8a18"/><path d="M2 23l6-5 6 2 1 3z" fill="#2a8ae8"/></svg>
      <svg class="dk" viewBox="0 0 22 22"><path d="M.7.7h20.600v20.600H.7z" fill="#b898b0" stroke="#fff" stroke-width="1.300"/><path d="M2 2h18v10H2z" fill="#f4b090"/><path d="M2 13l4-2 3 1 3-2 3 1 5 2v2H2z" fill="#181b29"/></svg>
      <svg class="dk" viewBox="0 0 22 22"><circle cx="11" cy="11" r="10.500" fill="#3a94f0"/><path d="M5 11l11-5-3 6z" fill="#f05a6a"/><path d="M5 11l3 5 8-10z" fill="#b0b4bc"/></svg>
      <span class="dk-fx">fx</span>
    </aside>
  </div>

  <footer class="status">
    <svg class="st-save" viewBox="0 0 18 18"><path d="M1 1h13l3 3v13H1z M4 1v5h8V1M4 17v-6h10v6" fill="none" stroke="#e0e0e0" stroke-width="1.200"/></svg>
    <span class="sep st"></span>
    <span class="st-t sheetno">Лист 1 из 1</span>
    <span class="sep st"></span>
    <span class="st-t selinfo">Выбрано: 1 строка, 6 столбцов</span>
    <span class="st-t sum">Сумма: 0</span>
    <span class="sep st"></span>
    <div class="zoom">
      <svg class="zb" viewBox="0 0 16 16"><circle cx="8" cy="8" r="7" fill="none" stroke="#e0e0e0" stroke-width="1.200"/><path d="M3.500 8h9" stroke="#e0e0e0" stroke-width="1.400"/></svg>
      <div class="slider"><i class="thumb"></i></div>
      <svg class="zb" viewBox="0 0 16 16"><circle cx="8" cy="8" r="7" fill="none" stroke="#e0e0e0" stroke-width="1.200"/><path d="M3.500 8h9M8 3.500v9" stroke="#e0e0e0" stroke-width="1.400"/></svg>
    </div>
    <span class="sep st"></span>
    <span class="st-t pct">110 %</span>
  </footer>

  <div class="dock">
    <div class="dock-bg"></div>
    <div class="dock-row">
      <span class="slot"><svg class="dico"><use href="#dFolder"/></svg><i class="dot"></i></span>
      <span class="slot"><svg class="dico"><use href="#dFire"/></svg></span>
      <span class="slot"><svg class="dico"><use href="#dCrt"/></svg></span>
      <span class="slot"><svg class="dico"><use href="#dGear"/></svg></span>
      <span class="slot"><svg class="dico"><use href="#dBag"/></svg></span>
      <span class="slot"><svg class="dico"><use href="#dPack"/></svg></span>
      <span class="slot"><svg class="dico"><use href="#dWave"/></svg><b class="badge">9 999</b></span>
      <span class="slot"><svg class="dico"><use href="#dVs"/></svg></span>
      <span class="slot"><svg class="dico"><use href="#dDisc"/></svg></span>
      <span class="slot"><svg class="dico"><use href="#dCalc"/></svg><i class="bar"></i></span>
      <span class="slot"><svg class="dico" viewBox="0 0 80 80"><circle cx="40" cy="40" r="38" fill="none" stroke="#f2f2f2" stroke-width="1"/><circle cx="40" cy="40" r="34" fill="none" stroke="#e0e0e0" stroke-width="3" stroke-dasharray="1 4"/><path d="M40 40l11-5M40 40v23" stroke="#f0f0f0" stroke-width="1.600"/><circle cx="40" cy="40" r="2.500" fill="#fff"/><text x="4" y="42" class="ck">9</text><text x="73" y="42" class="ck">3</text><text x="38" y="77" class="ck">6</text></svg></span>
      <span class="slot narrow"><svg class="dico" viewBox="0 0 80 80"><g fill="none" stroke="#f870a8" stroke-width="3"><path d="M23 25H57M33 25V21H47V25M27 25V57H53V25"/><path d="M36 34V48M44 34V48" stroke-width="3.500"/></g></svg></span>
    </div>
  </div>
</div>
</body>
</html>
```
FILE: styles.css
```css
* { box-sizing: border-box; }
html, body { margin: 0; height: 100%; }
body { background: #181b29; overflow: hidden; font-family: "Noto Sans", sans-serif; color: #c8ccd6; }
.defs { position: absolute; }
.app { position: relative; width: 1920px; height: 1080px; display: flex; flex-direction: column; overflow: hidden; }

/* top panel */
.panel { height: 42px; background: #151825; display: flex; align-items: center; flex: none; }
.kali { width: 30px; height: 32px; margin-left: 7px; flex: none; }
.pager { width: 33px; margin-left: 8px; display: flex; flex-direction: column; height: 40px; flex: none; }
.desk { flex: 1; background: #10121c; border: 1px solid #252836; display: flex; }
.desk.on { background: #8b83a6; border-color: #a98aff; padding: 3px 4px 3px 4px; }
.desk i { flex: 1; background: #aaa6bc; }
.menu { display: flex; gap: 12.800px; margin-left: 11px; font-size: 13px; flex: none; width: 604px; color: #c8ccd6; white-space: nowrap; }
.tasks { display: flex; gap: 0; flex: none; margin-left: -9px; height: 42px; }
.task { width: 50px; height: 42px; display: flex; justify-content: center; padding-top: 5px; position: relative; }
.tico { width: 33px; height: 33px; }
.task.open::after, .task.cur::after { content: ""; position: absolute; left: 4px; right: 4px; bottom: 0; height: 2px; background: #555a66; }
.task.cur::after { background: #b080ff; left: 3px; right: 3px; }
.eq { display: flex; gap: 2px; align-items: flex-end; height: 40px; align-self: flex-start; margin-left: 371px; flex: none; }
.eq i { width: 7px; }
.e1 { height: 7px; background: #c010d0; } .e2 { height: 8px; background: #e0105a; } .e3 { height: 12px; background: #d06000; } .e4 { height: 9px; background: #a8d000; }
.e5 { height: 6px; background: #10c810; } .e6 { height: 7px; background: #10c890; } .e7 { height: 6px; background: #1080d0; } .e8 { height: 8px; background: #3010d0; }
.tray { display: flex; align-items: center; margin-left: 18px; flex: 1; height: 42px; }
.tr { flex: none; display: block; }
.w16 { width: 16px; height: 26px; }
.w18 { width: 16px; height: 18px; }
.w12 { width: 12px; height: 8px; }
.w14 { width: 14px; height: 26px; }
.w30 { width: 30px; height: 25px; margin-left: 18px; margin-top: 6px; }
.m1 { margin-left: 26px; } .m2, .m3 { margin-left: 15px; } .m4 { margin-left: 13px; } .m5 { margin-left: 10px; } .m6 { margin-left: 12px; } .m7 { margin-left: 25px; } .m8 { margin-left: 26px; }
.us { font-size: 20px; margin-left: 12px; line-height: 1; color: #c8ccd6; }
.clock { display: flex; flex-direction: column; align-items: center; margin-left: 27px; width: 87px; flex: none; height: 42px; }
.time { font-size: 23px; line-height: 24px; color: #d4d7de; }
.date { font-size: 17px; line-height: 18px; color: #c8ccd6; }

/* window title */
.titlebar { height: 24px; flex: none; display: flex; align-items: center; justify-content: center; position: relative; background: linear-gradient(90deg, #1d1b2c 0%, #22253f 20%, #2c3148 42%, #2a3048 55%, #1d2441 75%, #201f36 90%, #181a2a 100%); }
.docico { width: 16px; height: 18px; position: absolute; left: 5px; top: 4px; }
.wtitle { font-size: 13px; color: #b4b8c4; margin-right: 50px; }
.winbtns { position: absolute; right: 7px; top: 5px; display: flex; gap: 10px; }
.winbtns i { width: 15px; height: 16px; border-radius: 50%; }
.wy { background: #fcd40f; } .wp { background: #a800e0; } .wr { background: #ff4040; }

/* toolbars */
.toolbar { display: flex; align-items: center; flex: none; background: #181b29; }
.tb1 { height: 39px; padding: 0 0 1px 2px; }
.tb2 { height: 38px; padding-left: 4px; }
.btn { width: 33px; height: 33px; flex: none; display: flex; align-items: center; justify-content: center; border: 1px solid transparent; border-radius: 4px; }
.btn svg { width: 22px; height: 22px; display: block; overflow: visible; }
.btn.wide svg { width: 26px; height: 24px; }
.btn.spell svg { width: 26px; height: 22px; }
.btn.on { background: #272a36; border-color: #3e424e; }
.btn.push { margin-left: 2px; }
.btn.tight { margin-left: -1px; }
.btn.nudge { margin-left: 1.500px; }
.arr { width: 11px; height: 33px; flex: none; display: flex; align-items: center; justify-content: center; }
.arr.short { width: 9.500px; }
.arr::before { content: ""; border: 4px solid transparent; border-top: 4.500px solid #e8e8e8; border-bottom: 0; }
.arr.dim::before { border-top-color: #50545e; }
.sep { width: 1px; height: 32px; background: #3c404c; flex: none; margin: 0 3px 0 3.500px; }
.arr + .sep { margin-left: 5px; }
.o { fill: none; stroke: #fff; stroke-width: 1.300; }
.ol { fill: none; stroke: #fff; stroke-width: 1.100; }
.gl { fill: none; stroke: #e8e8e8; stroke-width: 1; }
.ln { fill: none; stroke: #fff; stroke-width: 1.500; }
.ta { font: 700 18px "Liberation Sans", sans-serif; fill: #fff; }
.tabc { font: 400 11.500px "Noto Sans", sans-serif; fill: #fff; }
.tsb { font: 700 12px "Noto Sans", sans-serif; fill: #1f85ea; }
.tsw { font: 700 12px "Noto Sans", sans-serif; fill: #e8e8e8; }
.td { font: 400 14px "Noto Sans", sans-serif; fill: #fff; }
.tp { font: 700 20px "Liberation Sans", sans-serif; fill: #fff; }
.tblue { font: 400 17px "Noto Sans", sans-serif; fill: #2a8ae8; }
.tsty { font: 400 22px "Noto Sans", sans-serif; fill: #fff; }
.crt { font: 400 24px "Liberation Mono", monospace; fill: #ffa040; }
.ck { font: 700 7px "Noto Sans", sans-serif; fill: #e8e8e8; }
.omega { font: 400 25px "Liberation Sans", sans-serif; color: #1f85ea; line-height: 1; }
.glyph { color: #fff; line-height: 1; }
.bold { font: 700 23px "Noto Sans", sans-serif; }
.ital { font: italic 400 24px "Noto Sans", sans-serif; }
.under { font: 400 23px "Noto Sans", sans-serif; text-decoration: underline; text-underline-offset: 2px; }
.nf { font: 400 25px "Noto Sans", sans-serif; }
.tightnum { letter-spacing: -4px; padding-right: 4px; }
.seven { width: 20px; height: 20px; border: 2.500px solid #fff; color: #e8e8e8; font: 400 15px/15px "Noto Sans", sans-serif; text-align: center; display: block; }

.combo { display: flex; border: 1px solid #3e424e; border-radius: 4px; height: 32px; background: #1a1d2a; flex: none; align-items: stretch; }
.combo.font { width: 206px; margin-right: 9px; }
.combo.size { width: 94px; margin-right: 1px; }
.combo.name { width: 162px; margin-left: 4px; }
.val { flex: 1; font-size: 13px; line-height: 30px; padding-left: 9px; color: #c8ccd6; }
.drop { width: 29px; border-left: 1px solid #3e424e; display: flex; align-items: center; justify-content: center; }
.drop::before { content: ""; border: 5px solid transparent; border-top: 6px solid #9ca0aa; border-bottom: 0; }

/* workspace */
.workspace { flex: 1; display: flex; min-height: 0; }
.docarea { width: 1862px; flex: none; display: flex; flex-direction: column; }
.deck { flex: 1; position: relative; border-left: 1px solid #4a4e5a; display: flex; flex-direction: column; align-items: center; padding-top: 9px; gap: 21px; }
.deck-handle { position: absolute; left: 0; top: 420px; width: 7px; height: 73px; background: #50535f; }
.deck-handle::before { content: ""; position: absolute; left: 1px; top: 32px; border: 5px solid transparent; border-left: 5px solid #181b29; border-right: 0; }
.dk { width: 20px; height: 22px; display: block; overflow: visible; }
.dk-menu { width: 13px; }
.dk-style { width: 24px; }
.dk-fx { font: italic 400 26px "Liberation Serif", serif; color: #2a8ae8; line-height: 20px; }

.formula { height: 42px; flex: none; display: flex; align-items: center; padding-bottom: 4px; }
.formula .sep { margin-left: 4px; margin-right: 0; height: 30px; }
.fx { font: italic 400 22px "Liberation Serif", serif; color: #2a70c8; margin-left: 9px; width: 23px; }
.sigma { font: 400 22px "Noto Sans", sans-serif; color: #fff; width: 17px; }
.eqsign { font: 700 21px "Noto Sans", sans-serif; color: #fff; width: 19px; margin-left: 10px; }
.input { flex: none; width: 1580px; height: 25px; border: 1px solid #4a4e5a; font-size: 12.800px; line-height: 23px; padding-left: 6px; color: #c8ccd6; }
.fdrop { width: 22px; display: flex; justify-content: center; }
.fdrop::before { content: ""; border: 5px solid transparent; border-top: 5px solid #9ca0aa; border-bottom: 0; }

.viewrow { flex: none; height: 837px; display: flex; }
.sheet {
  width: 1853px; height: 837px; flex: none; position: relative; display: grid; overflow: hidden;
  grid-template-columns: 33px 47px 77px 77px 77px 77px 91px 91px 91px 91px 91px 57px repeat(10, 91px) 43px;
  grid-template-rows: 21px 30px 45px 18px repeat(11, 21px) repeat(27, 18px) 6px;
  background: #fff;
  font: 400 14.670px "Liberation Sans", sans-serif; color: #000;
}
.ch { background: #181b29; color: #c4c8d2; border-right: 1px solid #3c404c; border-bottom: 1px solid #50545e; font: 400 13px/20px "Noto Sans", sans-serif; text-align: center; padding-left: 2px; }
.corner { border-right-color: #50545e; }
.rh { background: #181b29; color: #c4c8d2; border-right: 1px solid #50545e; border-bottom: 1px solid #3c404c; font: 400 13px "Noto Sans", sans-serif; display: flex; align-items: center; justify-content: center; overflow: hidden; }
.rh:last-of-type { align-items: flex-start; }
.sel-h { background: #c60fd3; color: #fff; font-weight: 700; border-right-color: #b00cbc; }
.c { border-right: 1px solid #000; border-bottom: 1px solid #000; display: flex; align-items: flex-end; padding: 0 1px; line-height: 16px; white-space: nowrap; overflow: hidden; background: #fff; }
.s2 { grid-column: span 2; } .s3 { grid-column: span 3; } .s5 { grid-column: span 5; } .s6 { grid-column: span 6; }
.r2 { grid-row: span 2; } .r3 { grid-row: span 3; }
.ctr { justify-content: center; text-align: center; }
.mid { align-items: center; padding-top: 2px; }
.val-n { justify-content: flex-end; }
.b { font-weight: 700; }
.big { font: 700 19.600px "Liberation Sans", sans-serif; align-items: center; padding-top: 1px; }
.red-bg { background: #f0696b; }
.title-red { color: #d63a36; font: 700 19.500px "Liberation Sans", sans-serif; align-items: center; padding-top: 1px; }
.algo { font: 700 21.500px "Liberation Sans", sans-serif; }
.wrap { line-height: 18px; white-space: normal; }
.free { letter-spacing: .3px; padding: 2px 0 0; }
.blue { background: #b3c6dc; }
.green-d { background: #18a305; }
.green { background: #00d900; }
.sky { background: #5fb8ee; }
.pink { background: #ffb3bd; }
.salmon { background: #ff9c6e; }
.orange { background: #ff8c00; }
.back { background: #ff7b4c; font: 700 21.200px "Liberation Sans", sans-serif; }
.blank { grid-column: span 11; border-bottom: 1px solid #c8c8c8; background: repeating-linear-gradient(90deg, #fff 0 90px, #c8c8c8 90px 91px); }
.strip { grid-row: span 25; border-right: 1px solid #c8c8c8; background: repeating-linear-gradient(180deg, #fff 0 17px, #c8c8c8 17px 18px); }
.pagebreak { position: absolute; top: 0; bottom: 0; right: 0; width: 1px; background: repeating-linear-gradient(180deg, #5a5a5a 0 7px, transparent 7px 12px); }
.pb-j { grid-column: 11 / 12; grid-row: 19 / -1; }
.pb-s { grid-column: 20 / 21; grid-row: 2 / -1; }
.selection { position: absolute; grid-column: 7 / 13; grid-row: 8 / 9; top: -2px; bottom: 0; left: -2px; right: 0; border: 3px solid #c60fd3; }
.handle { position: absolute; right: -4px; bottom: -4px; width: 5px; height: 5px; background: #c60fd3; }

.vscroll { width: 9px; flex: none; display: flex; flex-direction: column; }
.vbtn { height: 5px; background: #3c404c; border-top: 1px solid #50545e; }
.vtrack { height: 404px; margin: 4px 0 0 4px; background: #3a3e4a; border-left: 1px solid #5a5e6a; border-radius: 3px 0 0 3px; }

.tabzone { flex: 1; display: flex; flex-direction: column; }
.hscroll { height: 5px; margin: 6px 0 0 5px; width: 876px; background: #3a3e4a; border-radius: 3px 3px 0 0; flex: none; }
.tabs { flex: 1; display: flex; align-items: center; position: relative; }
.nav { height: 14px; flex: none; display: block; }
.n1 { width: 14px; margin-left: 11px; } .n2 { width: 16px; margin-left: 7px; } .n3 { width: 16px; margin-left: 7px; } .n4 { width: 14px; margin-left: 9px; } .n5 { width: 12px; margin-left: 16px; }
.tab { margin-left: 10px; width: 58px; height: 22px; display: flex; align-items: center; justify-content: center; font: 700 12.500px "Noto Sans", sans-serif; color: #b8c8e0; border-bottom: 3px solid #50545e; align-self: flex-end; }

/* status */
.status { height: 25px; flex: none; border-top: 1px solid #4a4e5a; display: flex; align-items: center; position: relative; }
.sep.st { height: 18px; margin: 0; }
.st-save { width: 18px; height: 18px; margin: 0 3px 0 10px; flex: none; }
.st-t { font-size: 12.500px; color: #a8b4cc; white-space: nowrap; overflow: hidden; flex: none; }
.sheetno { width: 248px; padding-left: 9px; }
.selinfo { width: 104px; padding-left: 9px; }
.sum { margin-left: 1151px; width: 187px; }
.zoom { display: flex; align-items: center; width: 143px; padding-left: 5px; flex: none; gap: 3px; }
.zb { width: 16px; height: 16px; flex: none; }
.slider { width: 97px; height: 2px; background: #50545e; position: relative; }
.thumb { position: absolute; left: 43px; top: -7px; width: 13px; height: 15px; background: #2a2d38; border: 1px solid #e0e0e0; clip-path: polygon(0 0, 100% 0, 100% 65%, 50% 100%, 0 65%); }
.pct { padding-left: 9px; }

/* dock */
.dock { position: absolute; left: 385px; bottom: 0; width: 1151px; height: 95px; }
.dock-bg { position: absolute; left: 0; right: 0; bottom: 0; height: 30px; background: #181b29; border: 1px solid #262a42; border-bottom: 0; border-radius: 18px 18px 0 0; }
.dock-row { position: relative; display: flex; padding-left: 15px; }
.slot { width: 96px; height: 80px; flex: none; display: flex; justify-content: center; position: relative; }
.slot.narrow { width: 80px; margin-left: -8px; }
.dico { width: 80px; height: 80px; display: block; filter: drop-shadow(0 0 5px rgba(0, 0, 0, .35)); overflow: visible; }
.dot { position: absolute; left: 43px; top: 86px; width: 9px; height: 9px; border-radius: 50%; background: #8000ff; }
.bar { position: absolute; left: 0; top: 86px; width: 96px; height: 8px; border-radius: 4px; background: #8800ff; }
.badge { position: absolute; left: 17px; top: 5px; width: 65px; height: 30px; border-radius: 15px; background: #c010d0; border: 2px solid #a090a8; color: #fff; font: 700 18px/26px "Noto Sans", sans-serif; text-align: center; }
```
